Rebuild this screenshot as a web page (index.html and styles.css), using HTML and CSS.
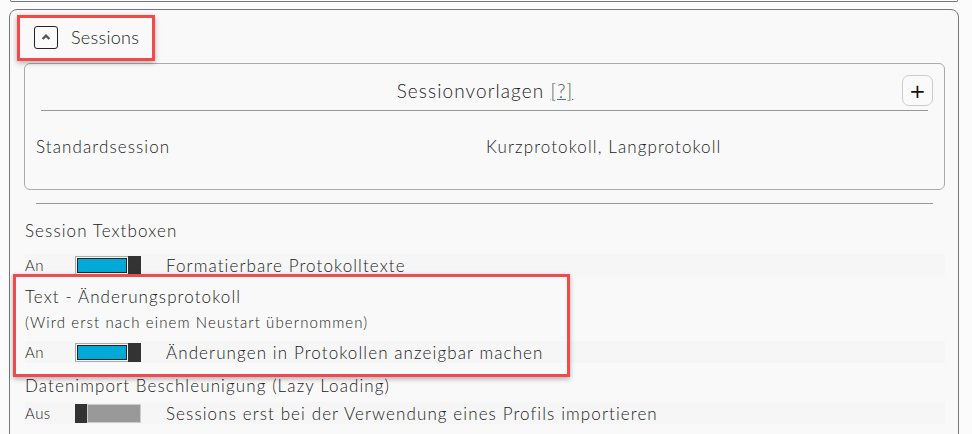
FILE: index.html
```html
<!DOCTYPE html>
<html lang="de">
<head>
<meta charset="utf-8">
<link rel="stylesheet" href="styles.css">
</head>
<body>
<div class="page">
  <div class="prev-card"></div>
  <section class="card">
    <header class="card-head">
      <button class="collapse" aria-label="Einklappen">
        <svg width="10" height="8" viewBox="0 0 10 8"><path d="M1.6 6 L5 2.6 L8.4 6" fill="none" stroke="#555" stroke-width="2.4"/></svg>
      </button>
      <span class="head-title">Sessions</span>
    </header>
    <div class="templates">
      <div class="templates-head">
        <span class="templates-title">Sessionvorlagen <a class="help" href="#">[?]</a></span>
        <button class="add">+</button>
      </div>
      <hr class="line inner-line">
      <div class="template-row">
        <span class="t-name">Standardsession</span>
        <span class="t-value">Kurzprotokoll, Langprotokoll</span>
      </div>
    </div>
    <hr class="line outer-line">
    <div class="setting s1">
      <div class="setting-title">Session Textboxen</div>
      <div class="setting-row">
        <span class="state">An</span>
        <span class="toggle on"><span class="track"><span class="fill"></span></span><span class="knob"></span></span>
        <span class="desc">Formatierbare Protokolltexte</span>
      </div>
    </div>
    <div class="setting s2">
      <div class="setting-title">Text - Änderungsprotokoll</div>
      <div class="setting-note">(Wird erst nach einem Neustart übernommen)</div>
      <div class="setting-row">
        <span class="state">An</span>
        <span class="toggle on"><span class="track"><span class="fill"></span></span><span class="knob"></span></span>
        <span class="desc">Änderungen in Protokollen anzeigbar machen</span>
      </div>
    </div>
    <div class="setting s3">
      <div class="setting-title">Datenimport Beschleunigung (Lazy Loading)</div>
      <div class="setting-row">
        <span class="state">Aus</span>
        <span class="toggle off"><span class="knob"></span><span class="track"></span></span>
        <span class="desc">Sessions erst bei der Verwendung eines Profils importieren</span>
      </div>
    </div>
  </section>
  <div class="highlight hl-head"></div>
  <div class="highlight hl-group"></div>
</div>
</body>
</html>
```
FILE: styles.css
```css
html, body {
  margin: 0;
  padding: 0;
  background: #fbfbfb;
}
body {
  font-family: "Lato", "Liberation Sans", sans-serif;
  font-weight: 300;
  color: #222;
  font-size: 17px;
  letter-spacing: 1.1px;
}
.page {
  position: relative;
  width: 972px;
  height: 434px;
  overflow: hidden;
}
.prev-card {
  margin-left: 10px;
  width: 946px;
  height: 1px;
  border: 1px solid #777;
  border-top: 0;
  border-radius: 0 0 5px 5px;
}
.card {
  margin: 7px 0 0 9px;
  width: 950px;
  height: 460px;
  border: 1px solid #777;
  border-radius: 8px;
  background: #f9f9f9;
  box-sizing: border-box;
  padding: 0 13px 0 14px;
}
.card-head {
  display: flex;
  align-items: center;
  height: 44px;
  margin-top: 5px;
  padding-left: 10px;
  gap: 13px;
}
.collapse {
  width: 24px;
  height: 23px;
  border: 1px solid #222;
  border-radius: 3px;
  background: #fafafa;
  padding: 0;
  display: flex;
  align-items: center;
  justify-content: center;
}
.head-title {
  font-size: 18px;
  letter-spacing: 0.3px;
}
.templates {
  margin-top: 4px;
  border: 1px solid #aaa;
  border-radius: 6px;
  height: 127px;
  box-sizing: border-box;
  padding: 11px 11px 0 16px;
}
.templates-head {
  position: relative;
  display: flex;
  justify-content: center;
  align-items: center;
  height: 30px;
}
.templates-title {
  font-size: 19px;
  margin-left: -4px;
}
.help {
  color: #555;
  text-decoration: underline;
  text-decoration-color: #2f6fd0;
}
.add {
  position: absolute;
  right: 0;
  top: 0;
  width: 31px;
  height: 31px;
  border: 1px solid #ccc;
  border-radius: 7px;
  background: #fafafa;
  font-family: "DejaVu Sans", sans-serif;
  font-size: 20px;
  color: #111;
  padding: 0;
  line-height: 1;
}
.line {
  border: 0;
  border-top: 1px solid #999;
  margin: 0;
}
.inner-line {
  margin-top: 5px;
  margin-right: 5px;
}
.template-row {
  display: flex;
  align-items: center;
  height: 34px;
  margin-top: 18px;
  margin-left: -5px;
}
.t-name {
  width: 450px;
}
.outer-line {
  margin: 13px 12px 0 12px;
}
.setting {
  padding-left: 1px;
}
.setting-title {
  height: 26px;
  line-height: 26px;
}
.s1 .setting-title { margin-top: 14px; }
.s2 .setting-title { margin-top: 8px; }
.s3 .setting-title { margin-top: 10px; }
.s1 .setting-row { margin-top: 10px; }
.s2 .setting-row { margin-top: 7px; }
.s3 .setting-row { margin-top: 3px; }
.setting-note {
  font-size: 15px;
  height: 24px;
  line-height: 24px;
}
.setting-row {
  display: flex;
  align-items: center;
  height: 22px;
  background: #f6f6f6;
  width: 920px;
}
.state {
  width: 50px;
  font-size: 15px;
  letter-spacing: 0.5px;
}
.desc {
  margin-left: 25px;
}
.toggle {
  display: flex;
  width: 66px;
  height: 19px;
}
.toggle.on .track {
  flex: 1;
  border: 1px solid #aaa;
  border-right: 0;
  padding: 1px;
  background: #f4f4f4;
}
.toggle .fill {
  display: block;
  height: 100%;
  box-sizing: border-box;
  background: #00a9d6;
  border: 1px solid #222;
}
.toggle .knob {
  width: 13px;
  background: #333;
}
.toggle.off .track {
  flex: 1;
  background: #999;
  border: 1px solid #ccc;
  margin-left: -1px;
}
.highlight {
  position: absolute;
  border: 3px solid #f04a4a;
  box-shadow: 0 2px 5px rgba(0,0,0,0.3);
  pointer-events: none;
}
.hl-head {
  left: 17px;
  top: 15px;
  width: 132px;
  height: 40px;
}
.hl-group {
  left: 13px;
  top: 274px;
  width: 551px;
  height: 97px;
}
```
